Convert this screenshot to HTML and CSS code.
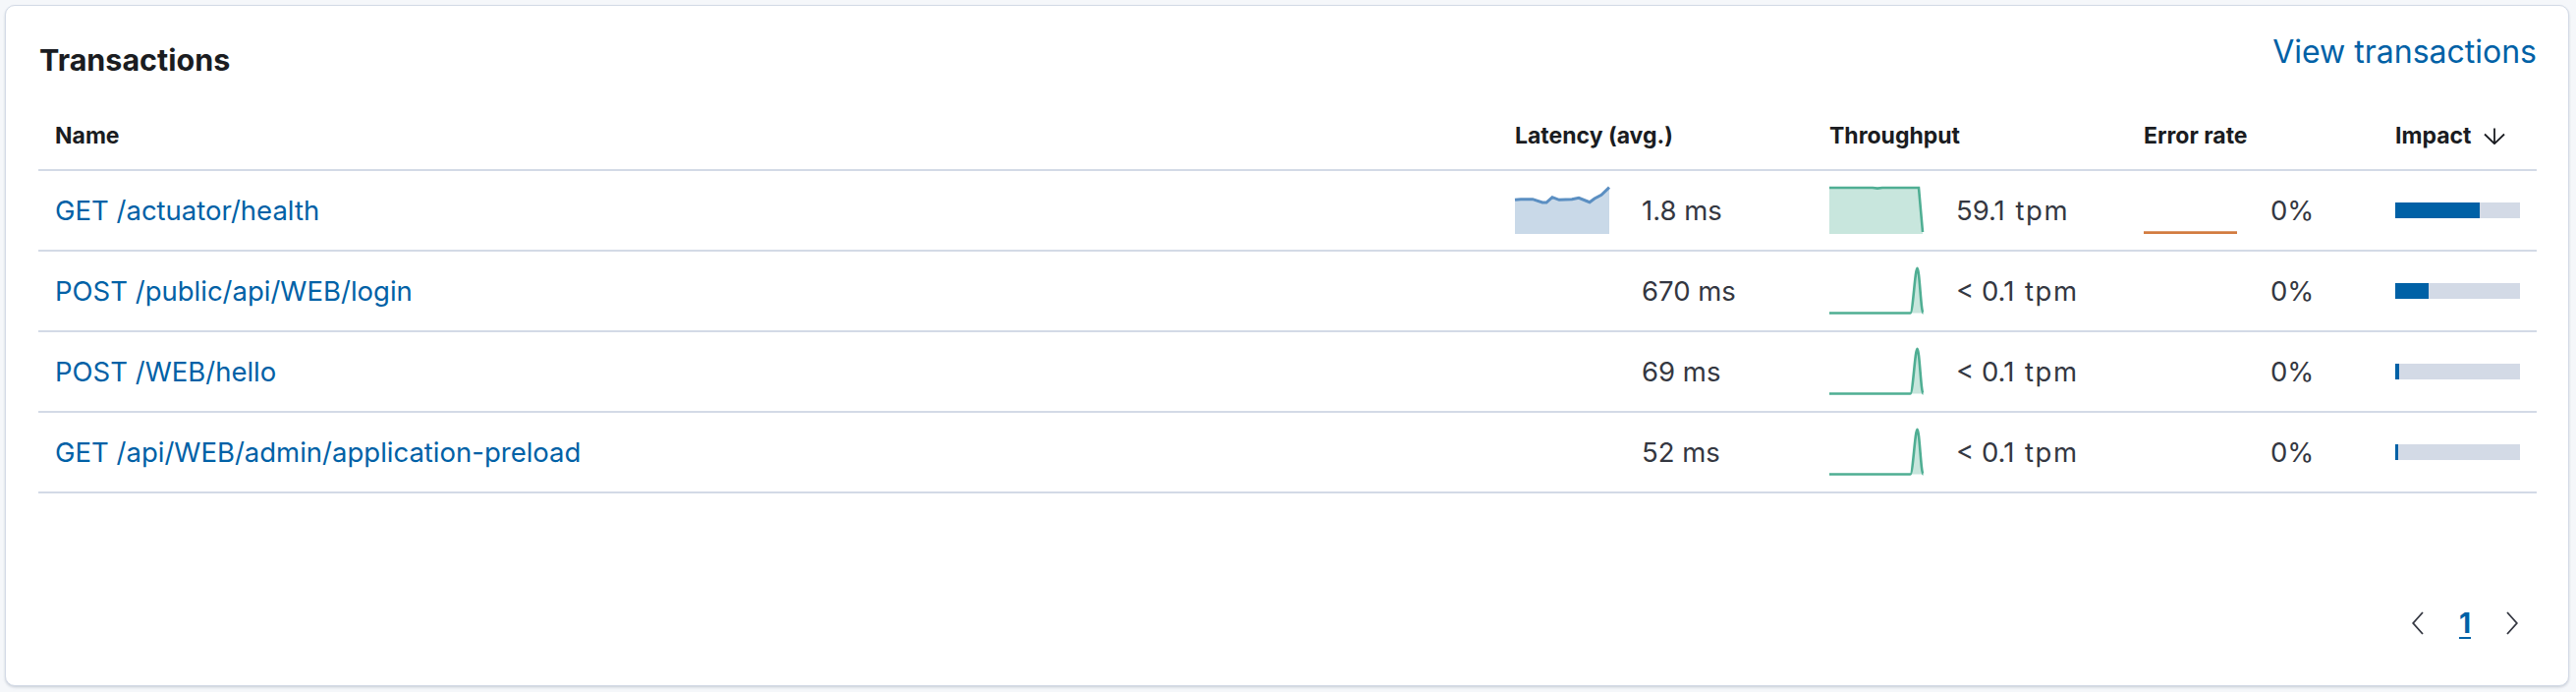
FILE: index.html
```html
<!DOCTYPE html>
<html lang="en">
<head>
<meta charset="utf-8">
<title>Transactions</title>
<link rel="stylesheet" href="styles.css">
</head>
<body>
<section class="panel">
  <header class="panel-head">
    <h2 class="panel-title">Transactions</h2>
    <a class="view-link" href="#">View transactions</a>
  </header>

  <div class="tx-table" role="table">
    <div class="tx-head" role="row">
      <div class="hcell">Name</div>
      <div class="hcell">Latency (avg.)</div>
      <div class="hcell">Throughput</div>
      <div class="hcell">Error rate</div>
      <div class="hcell hcell-sort">Impact
        <svg class="sort-icon" width="22" height="17" viewBox="0 0 22 17" aria-hidden="true"><path d="M11 0.5V16M1 6.5L11 16.2L21 6.5" fill="none" stroke="#1a1c21" stroke-width="1.8"/></svg>
      </div>
    </div>

    <div class="tx-row" role="row">
      <div class="cell"><a class="tx-link" href="#">GET /actuator/health</a></div>
      <div class="cell cell-metric">
        <svg class="spark" viewBox="0 0 96 48" preserveAspectRatio="none" aria-hidden="true">
          <path d="M0 13.3L6 12.7L18 12.7L28 16L32 16L38 10.7L45 13.3L58 12.7L65 11.3L76 15.7L81 12L88 8.3L96 0.7L96 48L0 48Z" fill="#c9d9e8"/>
          <path d="M0 13.3L6 12.7L18 12.7L28 16L32 16L38 10.7L45 13.3L58 12.7L65 11.3L76 15.7L81 12L88 8.3L96 0.7" fill="none" stroke="#5b8fc2" stroke-width="3"/>
        </svg>
        <span class="val">1.8 ms</span>
      </div>
      <div class="cell cell-metric">
        <svg class="spark" viewBox="0 0 96 48" preserveAspectRatio="none" aria-hidden="true">
          <path d="M0 1L44 1L49 1.6L54 1L91 1L95 46L95 48L0 48Z" fill="#c8e6dd"/>
          <path d="M0 1L44 1L49 1.6L54 1L91 1L95 46" fill="none" stroke="#4fae93" stroke-width="2.6"/>
        </svg>
        <span class="val">59.1 <span class="unit">tpm</span></span>
      </div>
      <div class="cell cell-metric">
        <svg class="spark" viewBox="0 0 96 48" preserveAspectRatio="none" aria-hidden="true">
          <path d="M0 46.6L95 46.6" fill="none" stroke="#d27b40" stroke-width="2.8"/>
        </svg>
        <span class="val">0%</span>
      </div>
      <div class="cell"><div class="impact-bar"><div class="impact-fill" style="width:68%"></div></div></div>
    </div>

    <div class="tx-row" role="row">
      <div class="cell"><a class="tx-link" href="#">POST /public/api/WEB/login</a></div>
      <div class="cell cell-metric">
        <span class="spark"></span>
        <span class="val">670 ms</span>
      </div>
      <div class="cell cell-metric">
        <svg class="spark" viewBox="0 0 96 48" preserveAspectRatio="none" aria-hidden="true">
          <path d="M82.5 46.5C85 46.5 87.3 0.8 89.5 0.8C91.7 0.8 93.3 46.5 95.5 46.5Z" fill="#c8e6dd"/>
          <path d="M0 46.5L82.5 46.5C85 46.5 87.3 0.8 89.5 0.8C91.7 0.8 93.3 46.5 95.5 46.5" fill="none" stroke="#4fae93" stroke-width="2.6"/>
        </svg>
        <span class="val">&lt; 0.1 <span class="unit">tpm</span></span>
      </div>
      <div class="cell cell-metric">
        <span class="spark"></span>
        <span class="val">0%</span>
      </div>
      <div class="cell"><div class="impact-bar"><div class="impact-fill" style="width:27%"></div></div></div>
    </div>

    <div class="tx-row" role="row">
      <div class="cell"><a class="tx-link" href="#">POST /WEB/hello</a></div>
      <div class="cell cell-metric">
        <span class="spark"></span>
        <span class="val">69 ms</span>
      </div>
      <div class="cell cell-metric">
        <svg class="spark" viewBox="0 0 96 48" preserveAspectRatio="none" aria-hidden="true">
          <path d="M82.5 46.5C85 46.5 87.3 0.8 89.5 0.8C91.7 0.8 93.3 46.5 95.5 46.5Z" fill="#c8e6dd"/>
          <path d="M0 46.5L82.5 46.5C85 46.5 87.3 0.8 89.5 0.8C91.7 0.8 93.3 46.5 95.5 46.5" fill="none" stroke="#4fae93" stroke-width="2.6"/>
        </svg>
        <span class="val">&lt; 0.1 <span class="unit">tpm</span></span>
      </div>
      <div class="cell cell-metric">
        <span class="spark"></span>
        <span class="val">0%</span>
      </div>
      <div class="cell"><div class="impact-bar"><div class="impact-fill" style="width:3.2%"></div></div></div>
    </div>

    <div class="tx-row" role="row">
      <div class="cell"><a class="tx-link" href="#">GET /api/WEB/admin/application-preload</a></div>
      <div class="cell cell-metric">
        <span class="spark"></span>
        <span class="val">52 ms</span>
      </div>
      <div class="cell cell-metric">
        <svg class="spark" viewBox="0 0 96 48" preserveAspectRatio="none" aria-hidden="true">
          <path d="M82.5 46.5C85 46.5 87.3 0.8 89.5 0.8C91.7 0.8 93.3 46.5 95.5 46.5Z" fill="#c8e6dd"/>
          <path d="M0 46.5L82.5 46.5C85 46.5 87.3 0.8 89.5 0.8C91.7 0.8 93.3 46.5 95.5 46.5" fill="none" stroke="#4fae93" stroke-width="2.6"/>
        </svg>
        <span class="val">&lt; 0.1 <span class="unit">tpm</span></span>
      </div>
      <div class="cell cell-metric">
        <span class="spark"></span>
        <span class="val">0%</span>
      </div>
      <div class="cell"><div class="impact-bar"><div class="impact-fill" style="width:2.4%"></div></div></div>
    </div>
  </div>

  <nav class="pager" aria-label="Pagination">
    <button class="pager-btn" type="button" aria-label="Previous page">
      <svg width="12" height="24" viewBox="0 0 12 24" aria-hidden="true"><path d="M11 1L1.2 12L11 23" fill="none" stroke="#343741" stroke-width="1.8"/></svg>
    </button>
    <button class="pager-btn pager-current" type="button">1</button>
    <button class="pager-btn" type="button" aria-label="Next page">
      <svg width="12" height="24" viewBox="0 0 12 24" aria-hidden="true"><path d="M1 1L10.8 12L1 23" fill="none" stroke="#343741" stroke-width="1.8"/></svg>
    </button>
  </nav>
</section>
</body>
</html>
```

FILE: styles.css
```css
html, body {
  margin: 0;
  padding: 0;
}

body {
  background: #f5f7fa;
  font-family: Inter, "Noto Sans", sans-serif;
  color: #343741;
  height: 704px;
  overflow: hidden;
}

.panel {
  margin: 5px 7px 6px 5px;
  background: #ffffff;
  border: 1px solid #d3dae6;
  border-radius: 10px;
  box-shadow: 0 1px 2px rgba(152, 162, 179, 0.3), 0 2px 3px rgba(152, 162, 179, 0.18);
  padding: 31px 32px 43px 33px;
}

.panel-head {
  display: flex;
  justify-content: space-between;
  align-items: flex-start;
  height: 48px;
}

.panel-title {
  margin: 0;
  font-size: 30.5px;
  line-height: 48px;
  font-weight: 700;
  color: #1a1c21;
  padding-left: 1px;
}

.view-link {
  font-size: 32px;
  line-height: 32px;
  color: #0061a6;
  text-decoration: none;
}

.tx-table {
  display: flex;
  flex-direction: column;
}

.tx-head,
.tx-row {
  display: grid;
  grid-template-columns: 1486px 320px 320px 256px 161px;
  border-bottom: 2px solid #d3dae6;
}

.tx-head {
  padding: 40px 0 21px;
}

.hcell {
  padding: 0 17px;
  font-size: 23px;
  line-height: 26px;
  font-weight: 700;
  color: #1a1c21;
  white-space: nowrap;
}

.hcell-sort {
  display: flex;
  align-items: center;
  gap: 13px;
}

.sort-icon {
  display: block;
  margin-top: 1px;
}

.tx-row {
  height: 82px;
  box-sizing: border-box;
  align-items: center;
}

.cell {
  padding: 0 17px;
  font-size: 27.5px;
  line-height: 33px;
  display: flex;
  align-items: center;
  white-space: nowrap;
}

.cell-metric {
  gap: 33px;
}

.tx-link {
  color: #0061a6;
  text-decoration: none;
}

.val {
  color: #343741;
}

.unit {
  margin-left: 3px;
  letter-spacing: 1.5px;
}

.spark {
  display: block;
  flex: none;
  width: 96px;
  height: 48px;
  overflow: visible;
}

.impact-bar {
  width: 128px;
  height: 16px;
  background: #d3dae6;
  display: flex;
}

.impact-fill {
  height: 100%;
  background: #0061a6;
}

.pager {
  margin-top: 112px;
  display: flex;
  justify-content: flex-end;
  padding-right: 1px;
}

.pager-btn {
  width: 48px;
  height: 40px;
  border: 0;
  background: transparent;
  padding: 0;
  display: flex;
  align-items: center;
  justify-content: center;
  font-family: inherit;
  cursor: pointer;
}

.pager-current {
  font-size: 28px;
  font-weight: 700;
  color: #0061a6;
  text-decoration: underline;
  text-decoration-thickness: 2px;
  text-underline-offset: 4px;
}
```
